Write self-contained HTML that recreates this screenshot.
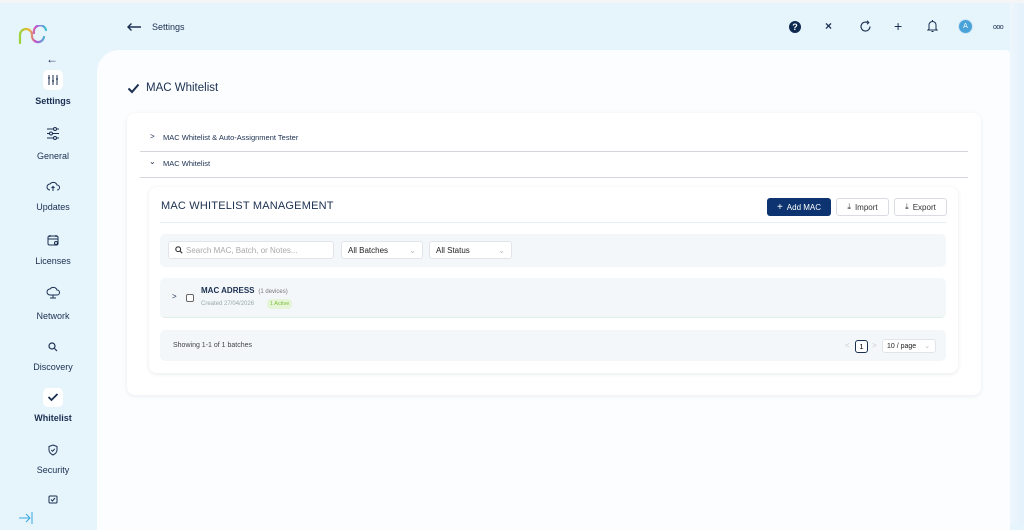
<!DOCTYPE html>
<html><head><meta charset="utf-8"><style>
*{box-sizing:border-box;margin:0;padding:0}
body{width:1024px;height:525px;overflow:hidden;background:#e6f4fc;font-family:"Liberation Sans",sans-serif;color:#1b2f50;position:relative}
.abs{position:absolute}
.top{left:0;top:0;width:1024px;height:3px;background:#f3f5f7}
.panel{left:97px;top:50px;width:913px;height:480px;background:#fbfdfe;border-top-left-radius:22px;border-top-right-radius:4px}
.rstrip{left:1010px;top:3px;width:14px;height:522px;background:linear-gradient(90deg,#eef6fc,#e3f1fb)}
.side{font-size:9px;color:#1b2f50;text-align:center;width:106px;left:0}
.card{background:#fff;border-radius:8px;box-shadow:0 1px 4px rgba(20,40,80,.08)}
.btn{border:1px solid #d9dde3;border-radius:3px;background:#fff;font-size:8px;color:#333;display:flex;align-items:center;justify-content:center;gap:4px}
.grey{background:#f4f7fa;border-radius:5px}
.sel{background:#fff;border:1px solid #e1e5ea;border-radius:3px;font-size:8px;color:#222;padding-left:6px;display:flex;align-items:center}
</style></head><body>
<div class="abs top"></div>
<div class="abs rstrip"></div>
<!-- logo -->
<svg class="abs" style="left:17px;top:25px" width="32" height="20" viewBox="0 0 32 20">
<defs><linearGradient id="g" x1="0" x2="1"><stop offset="0" stop-color="#9ad33a"/><stop offset=".35" stop-color="#f2b632"/><stop offset=".6" stop-color="#c04fd0"/><stop offset="1" stop-color="#3bc3d8"/></linearGradient></defs>
<path d="M3 18 V10 A6 6 0 0 1 15 10 A6 6 0 0 0 27 12 M29 5 A6 6 0 0 0 17 8" fill="none" stroke="url(#g)" stroke-width="2.2" stroke-linecap="round"/>
</svg>
<!-- sidebar -->
<div class="abs" style="left:46px;top:52px;font-size:12px;color:#1b2f50">←</div>
<div class="abs" style="left:43px;top:70px;width:20px;height:20px;background:#fff;border-radius:5px"></div>
<svg class="abs" style="left:47px;top:74px" width="12" height="12" viewBox="0 0 12 12" stroke="#1b2f50" stroke-width="1" fill="none"><path d="M2 1v10M6 1v10M10 1v10M1 4h2M5 7h2M9 5h2"/></svg>
<div class="abs side" style="top:96px;font-weight:bold">Settings</div>
<svg class="abs" style="left:46px;top:127px" width="14" height="13" viewBox="0 0 14 13" stroke="#1b2f50" stroke-width="1" fill="none"><path d="M1 2h12M1 6.5h12M1 11h12"/><circle cx="9" cy="2" r="1.5" fill="#e6f4fc"/><circle cx="5" cy="6.5" r="1.5" fill="#e6f4fc"/><circle cx="9" cy="11" r="1.5" fill="#e6f4fc"/></svg>
<div class="abs side" style="top:151px">General</div>
<svg class="abs" style="left:46px;top:181px" width="14" height="11" viewBox="0 0 14 11" stroke="#1b2f50" stroke-width="1" fill="none"><path d="M4 9a3 3 0 0 1 0-6 4 4 0 0 1 7 1 2.5 2.5 0 0 1 0 5 M7 10V5.5M5.5 7 7 5.5 8.5 7"/></svg>
<div class="abs side" style="top:202px">Updates</div>
<svg class="abs" style="left:47px;top:234px" width="12" height="12" viewBox="0 0 12 12" stroke="#1b2f50" stroke-width="1" fill="none"><rect x="1" y="2" width="10" height="9" rx="1.5"/><path d="M3 1v2M9 1v2M1 5h10"/><circle cx="9" cy="9" r="1.5"/></svg>
<div class="abs side" style="top:256px">Licenses</div>
<svg class="abs" style="left:46px;top:286px" width="14" height="14" viewBox="0 0 14 14" stroke="#1b2f50" stroke-width="1" fill="none"><path d="M4 9a3 3 0 0 1 0-6 4 4 0 0 1 7 1 2.5 2.5 0 0 1 0 5z M7 9v3M4 12h6"/></svg>
<div class="abs side" style="top:311px">Network</div>
<svg class="abs" style="left:48px;top:342px" width="10" height="10" viewBox="0 0 10 10" stroke="#1b2f50" stroke-width="1.2" fill="none"><circle cx="4" cy="4" r="3"/><path d="M6.5 6.5 9 9"/></svg>
<div class="abs side" style="top:362px">Discovery</div>
<div class="abs" style="left:43px;top:388px;width:20px;height:19px;background:#fff;border-radius:5px"></div>
<svg class="abs" style="left:47px;top:392px" width="12" height="10" viewBox="0 0 12 10" stroke="#1b2f50" stroke-width="1.8" fill="none"><path d="M1.5 5 4.5 8 10.5 2"/></svg>
<div class="abs side" style="top:413px;font-weight:bold">Whitelist</div>
<svg class="abs" style="left:48px;top:444px" width="10" height="12" viewBox="0 0 10 12" stroke="#1b2f50" stroke-width="1" fill="none"><path d="M5 1 9 2.5V6c0 2.5-2 4-4 5-2-1-4-2.5-4-5V2.5z M3.3 6 4.6 7.3 6.8 4.8"/></svg>
<div class="abs side" style="top:465px">Security</div>
<svg class="abs" style="left:48px;top:494px" width="10" height="10" viewBox="0 0 10 10" stroke="#1b2f50" stroke-width="1" fill="none"><rect x="1" y="2" width="8" height="7" rx="1"/><path d="M3 5.5 4.5 7 7 4"/></svg>
<svg class="abs" style="left:18px;top:512px" width="16" height="12" viewBox="0 0 16 12" stroke="#3aa7e0" stroke-width="1" fill="none"><path d="M1 6h11M8 2l4 4-4 4M14 0v12"/></svg>
<!-- topbar -->
<svg class="abs" style="left:126px;top:22px" width="16" height="10" viewBox="0 0 16 10" stroke="#1b2f50" stroke-width="1.4" fill="none"><path d="M15 5H2M5.5 1.5 2 5l3.5 3.5"/></svg>
<div class="abs" style="left:152px;top:22px;font-size:9px">Settings</div>
<div class="abs" style="left:789px;top:21px;width:12px;height:12px;border-radius:50%;background:#0f2a50;color:#fff;font-size:9px;font-weight:bold;text-align:center;line-height:12px">?</div>
<div class="abs" style="left:825px;top:19px;font-size:12px;font-weight:bold;color:#1b2f50">×</div>
<svg class="abs" style="left:859px;top:20px" width="13" height="13" viewBox="0 0 13 13" stroke="#1b2f50" stroke-width="1.1" fill="none"><path d="M11 6.5A4.5 4.5 0 1 1 8.5 2.5M8 0.8l1.8 1.8L8 4.2"/></svg>
<div class="abs" style="left:894px;top:18px;font-size:14px;color:#1b2f50">+</div>
<svg class="abs" style="left:927px;top:19px" width="11" height="14" viewBox="0 0 11 14" stroke="#1b2f50" stroke-width="1" fill="none"><path d="M2 10V6a3.5 3.5 0 0 1 7 0v4l1 1H1zM4.5 12.5h2M5.5 1v1"/></svg>
<div class="abs" style="left:959px;top:20px;width:13px;height:13px;border-radius:50%;background:#4aa3d8;color:#fff;font-size:7px;text-align:center;line-height:13px;box-shadow:0 0 0 1px #cfe6f5">A</div>
<div class="abs" style="left:993px;top:24px;font-size:7px;letter-spacing:-.5px;color:#1b2f50">ooo</div>
<!-- panel -->
<div class="abs panel"></div>
<svg class="abs" style="left:127px;top:83px" width="13" height="11" viewBox="0 0 13 11" stroke="#1b2f50" stroke-width="2" fill="none"><path d="M1.5 5.5 5 9 11.5 1.5"/></svg>
<div class="abs" style="left:146px;top:82px;font-size:11.5px">MAC Whitelist</div>
<div class="abs card" style="left:127px;top:113px;width:854px;height:282px"></div>
<div class="abs" style="left:150px;top:132px;font-size:8px">&gt;</div>
<div class="abs" style="left:163px;top:133px;font-size:7.5px">MAC Whitelist &amp; Auto-Assignment Tester</div>
<div class="abs" style="left:140px;top:151px;width:828px;height:1px;background:#d3d6da"></div>
<div class="abs" style="left:149px;top:157px;font-size:8px">⌄</div>
<div class="abs" style="left:163px;top:159px;font-size:7.5px">MAC Whitelist</div>
<div class="abs" style="left:140px;top:177px;width:828px;height:1px;background:#d3d6da"></div>
<div class="abs card" style="left:149px;top:187px;width:809px;height:186px;box-shadow:0 1px 5px rgba(20,40,80,.1)"></div>
<div class="abs" style="left:161px;top:200px;font-size:11px;letter-spacing:.2px">MAC WHITELIST MANAGEMENT</div>
<div class="abs" style="left:160px;top:222px;width:786px;height:1px;background:#e6eef5"></div>
<div class="abs" style="left:767px;top:198px;width:64px;height:18px;background:#0d3470;border-radius:3px;color:#fff;font-size:8px;display:flex;align-items:center;justify-content:center;gap:4px"><span style="font-size:10px">+</span>Add MAC</div>
<div class="abs btn" style="left:836px;top:198px;width:53px;height:18px"><span>⤓</span>Import</div>
<div class="abs btn" style="left:894px;top:198px;width:53px;height:18px"><span>⤓</span>Export</div>
<div class="abs grey" style="left:160px;top:234px;width:786px;height:33px"></div>
<div class="abs sel" style="left:168px;top:241px;width:166px;height:18px;color:#aaa"><svg width="8" height="8" viewBox="0 0 10 10" stroke="#333" stroke-width="1.4" fill="none" style="margin-right:3px"><circle cx="4" cy="4" r="3"/><path d="M6.5 6.5 9 9"/></svg>Search MAC, Batch, or Notes...</div>
<div class="abs sel" style="left:341px;top:241px;width:82px;height:18px">All Batches<span style="position:absolute;right:6px;color:#bbb">⌄</span></div>
<div class="abs sel" style="left:429px;top:241px;width:83px;height:18px">All Status<span style="position:absolute;right:6px;color:#bbb">⌄</span></div>
<div class="abs grey" style="left:160px;top:278px;width:786px;height:40px;border-bottom:1px solid #e0efe6"></div>
<div class="abs" style="left:172px;top:292px;font-size:8px">&gt;</div>
<div class="abs" style="left:186px;top:294px;width:8px;height:8px;border:1px solid #666;border-radius:2px;background:#fff"></div>
<div class="abs" style="left:201px;top:286px;font-size:8px;font-weight:bold">MAC ADRESS <span style="font-weight:normal;font-size:6px;color:#777">&nbsp;(1 devices)</span></div>
<div class="abs" style="left:201px;top:301px;font-size:6px;color:#9aa">Created 27/04/2026</div>
<div class="abs" style="left:267px;top:299px;font-size:5.5px;color:#7bbf3a;background:#e6f5d8;border-radius:4px;padding:2px 3px">1 Active</div>
<div class="abs grey" style="left:160px;top:330px;width:786px;height:31px"></div>
<div class="abs" style="left:173px;top:342px;font-size:7px;color:#444">Showing 1-1 of 1 batches</div>
<div class="abs" style="left:845px;top:341px;font-size:8px;color:#ccc">&lt;</div>
<div class="abs" style="left:855px;top:340px;width:13px;height:13px;border:1px solid #1b2f50;border-radius:3px;font-size:7.5px;text-align:center;line-height:11px;background:#fff;color:#000">1</div>
<div class="abs" style="left:872px;top:341px;font-size:8px;color:#ccc">&gt;</div>
<div class="abs sel" style="left:882px;top:339px;width:54px;height:14px;font-size:7px;padding-left:4px">10 / page<span style="position:absolute;right:5px;color:#bbb">⌄</span></div>
</body></html>
